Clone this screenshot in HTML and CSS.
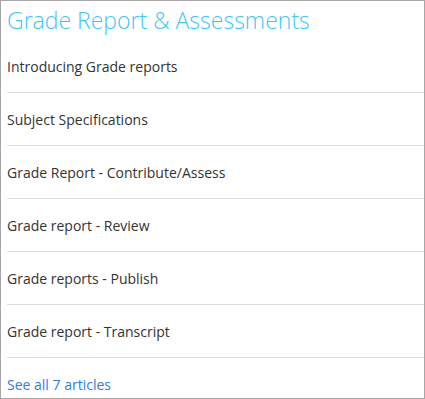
FILE: index.html
```html
<!DOCTYPE html>
<html lang="en">
<head>
  <meta charset="UTF-8">
  <title>Grade Report &amp; Assessments</title>
  <link rel="stylesheet" href="styles.css">
</head>
<body>
  <div class="section-card">
    <h2 class="section-title">Grade Report &amp; Assessments</h2>
    <ul class="article-list">
      <li class="article-item"><a href="#">Introducing Grade reports</a></li>
      <li class="article-item"><a href="#">Subject Specifications</a></li>
      <li class="article-item"><a href="#">Grade Report - Contribute/Assess</a></li>
      <li class="article-item"><a href="#">Grade report - Review</a></li>
      <li class="article-item"><a href="#">Grade reports - Publish</a></li>
      <li class="article-item"><a href="#">Grade report - Transcript</a></li>
    </ul>
    <a class="see-all" href="#">See all 7 articles</a>
  </div>
</body>
</html>
```

FILE: styles.css
```css
html, body {
  margin: 0;
  padding: 0;
}
body {
  font-family: "Open Sans", "Noto Sans", Arial, sans-serif;
  background: #fff;
}
.section-card {
  box-sizing: border-box;
  width: 425px;
  height: 399px;
  border: 1px solid #a6a6a6;
  padding: 0 0 0 6px;
  overflow: hidden;
}
.section-title {
  margin: 0;
  height: 39px;
  line-height: 39px;
  font-size: 23px;
  font-weight: 300;
  color: #3fc6f5;
}
.article-list {
  list-style: none;
  margin: 0;
  padding: 0;
}
.article-item {
  display: flex;
  align-items: center;
  height: 52px;
  border-bottom: 1px solid #dcdcdc;
}
.article-item a {
  color: #333;
  text-decoration: none;
  font-size: 14px;
}
.see-all {
  display: block;
  margin-top: 17px;
  font-size: 14px;
  color: #2d7be5;
  text-decoration: none;
}
```
